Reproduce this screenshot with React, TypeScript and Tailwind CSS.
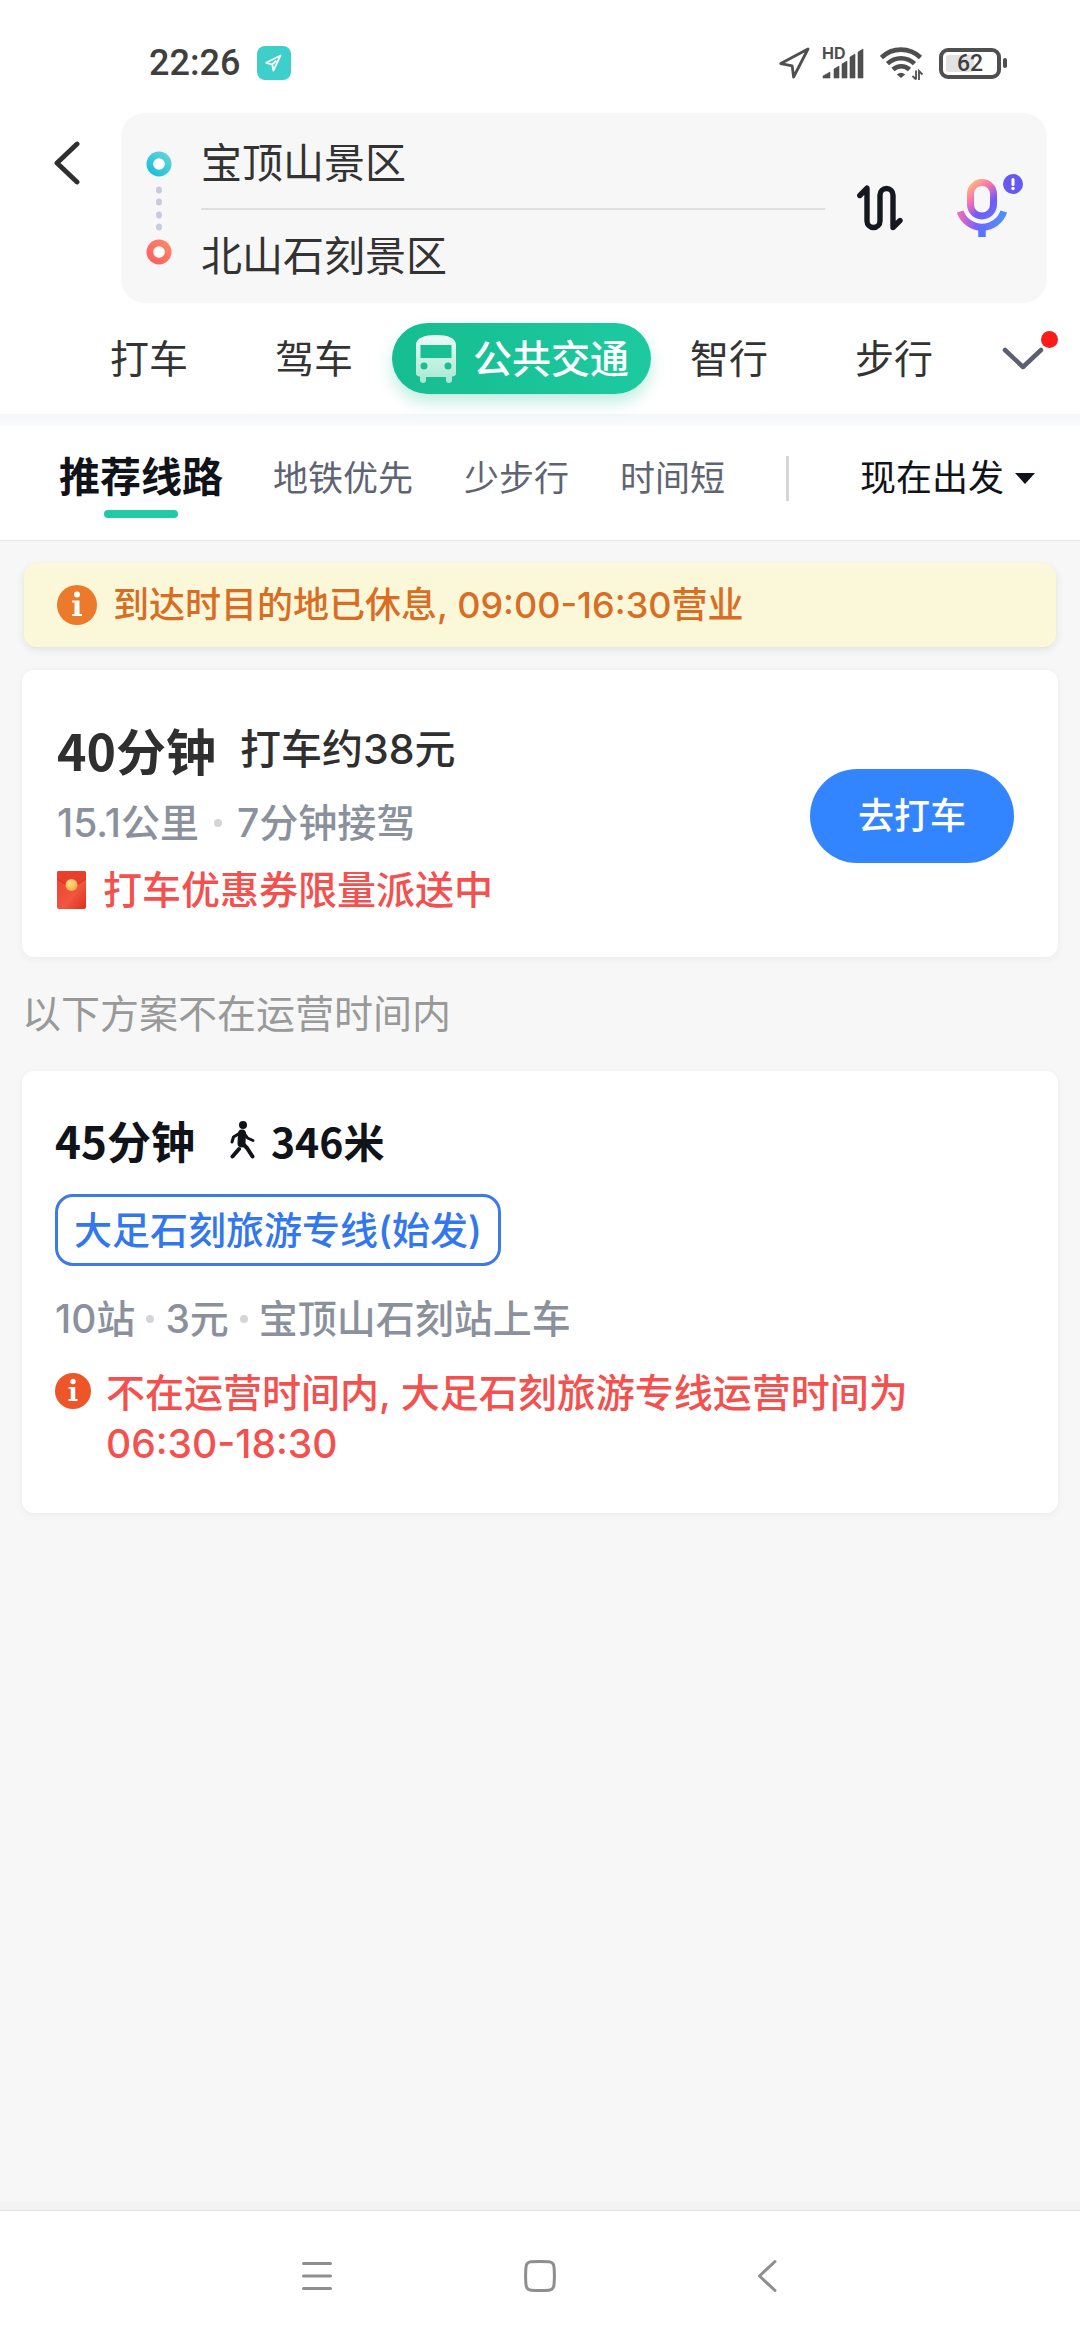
import React, { useState } from 'react';

const MODES_LEFT = ['打车', '驾车'];
const MODES_RIGHT = ['智行', '步行'];
const SORTS = ['地铁优先', '少步行', '时间短'];

const StatusBar: React.FC = () => (
  <div className="flex h-[113px] items-start justify-between pt-[45px] pl-[149px] pr-[73px] text-[#4f4f4f]">
    <div className="flex h-[36px] items-center gap-[17px]">
      <span className="font-['Roboto'] text-[36px] leading-[36px] font-medium text-[#3f3f3f]">22:26</span>
      <svg className="h-[34px] w-[34px]" viewBox="0 0 34 34" fill="none">
        <rect width="34" height="34" rx="8" fill="#3fcfcb" />
        <path d="M23.5 9.5 9.2 16.8l6 1.7 1.2 6.2z M15.2 18.5l4-3.8" stroke="#fff" strokeWidth="1.8" strokeLinejoin="round" />
      </svg>
    </div>
    <div className="flex h-[36px] items-center">
      <svg className="mr-[12px] h-[32px] w-[31px]" viewBox="0 0 31 32" fill="none">
        <path d="M29 2 1.8 16.6l11.4 2.2L14.6 30z" stroke="currentColor" strokeWidth="2.8" strokeLinejoin="round" />
      </svg>
      <div className="relative mr-[16px] h-[32px] w-[42px]">
        <span className="absolute -top-[1px] left-0 font-['Inter'] text-[16px] leading-[14px] font-bold">HD</span>
        <svg className="h-[32px] w-[42px]" viewBox="0 0 42 32" fill="currentColor">
          <path d="M1 31v-2l7-4v6z M12 31V22l5-3v12z M20 31V17l5-3v17z M28 31V10l5-3v24z M36 31V5l5-3v29z" stroke="currentColor" strokeWidth=".6" strokeLinejoin="round" />
        </svg>
      </div>
      <svg className="mr-[16px] h-[34px] w-[43px]" viewBox="0 0 43 34" fill="none">
        <g stroke="currentColor" strokeWidth="4.6">
          <path d="M1.5 11.5a28 28 0 0 1 39 0" />
          <path d="M7.5 17.7a19.5 19.5 0 0 1 27 0" />
          <path d="M13 23.5a12 12 0 0 1 16.500 0" />
        </g>
        <path d="M16.800 28.500a6.500 6.500 0 0 1 8.400 0L21 32z" fill="currentColor" />
        <path d="M36 24.500v9M36 33.500l-3.500-3.500M39 34v-9l3.500 3.500" stroke="currentColor" strokeWidth="1.800" />
      </svg>
      <div className="flex items-center gap-[2px]">
        <div className="relative flex h-[31px] w-[62px] items-center justify-center rounded-[9px] border-4 border-[#4f4f4f]">
          <span className="absolute top-[3px] bottom-[3px] left-[3px] w-[28px] rounded-[3px] bg-[#e2e2e2]" />
          <span className="relative font-['Roboto'] text-[23px] leading-[23px] font-medium text-[#3f3f3f]">62</span>
        </div>
        <span className="h-[10px] w-[4px] rounded-full bg-[#4f4f4f]" />
      </div>
    </div>
  </div>
);

const RouteDots: React.FC = () => (
  <svg className="h-[116px] w-[26px]" viewBox="0 0 26 116">
    <defs>
      <linearGradient id="startDot" x1="1" y1="0" x2="0" y2="1">
        <stop offset="0" stopColor="#6adbd3" />
        <stop offset="1" stopColor="#12b7dd" />
      </linearGradient>
      <linearGradient id="endDot" x1="1" y1="0" x2="0" y2="1">
        <stop offset="0" stopColor="#ff8c66" />
        <stop offset="1" stopColor="#fd5963" />
      </linearGradient>
    </defs>
    <circle cx="13" cy="14" r="12.500" fill="url(#startDot)" />
    <circle cx="13" cy="14" r="5.800" fill="#fff" />
    {[40, 52, 65, 77].map(y => (
      <ellipse key={y} cx="13" cy={y} rx="3" ry="3.600" fill="#cbc9de" />
    ))}
    <circle cx="13" cy="102" r="12.500" fill="url(#endDot)" />
    <circle cx="13" cy="102" r="5.800" fill="#fff" />
  </svg>
);

const MicIcon: React.FC = () => (
  <svg className="h-[68px] w-[68px]" viewBox="0 0 68 68" fill="none">
    <defs>
      <linearGradient id="micBody" x1="10" y1="8" x2="42" y2="44" gradientUnits="userSpaceOnUse">
        <stop offset="0.1" stopColor="#ffb086" />
        <stop offset="0.35" stopColor="#fb6fae" />
        <stop offset="0.65" stopColor="#6c5cf7" />
        <stop offset="1" stopColor="#6d74ff" />
      </linearGradient>
      <linearGradient id="micStand" x1="0" y1="40" x2="50" y2="46" gradientUnits="userSpaceOnUse">
        <stop offset="0" stopColor="#fb6fae" />
        <stop offset="0.4" stopColor="#7e60fb" />
        <stop offset="1" stopColor="#4595ff" />
      </linearGradient>
    </defs>
    <rect x="13.500" y="8.500" width="23" height="33.500" rx="11.500" stroke="url(#micBody)" strokeWidth="7" />
    <path d="M3.200 37.500a23 23 0 0 0 43.600 0" stroke="url(#micStand)" strokeWidth="7" />
    <path d="M25 52v11" stroke="#5a74ff" strokeWidth="7.500" />
    <circle cx="56" cy="10" r="10" fill="#6659ef" />
    <path d="M56 5.500v5" stroke="#fff" strokeWidth="3" strokeLinecap="round" />
    <circle cx="56" cy="14.500" r="1.700" fill="#fff" />
  </svg>
);

const SearchBox: React.FC = () => (
  <div className="flex items-start pr-[33px]">
    <button aria-label="返回" className="flex h-[100px] w-[121px] items-center pl-[53px]">
      <svg className="h-[44px] w-[28px]" viewBox="0 0 28 44" fill="none">
        <path d="M24 3 4 22l20 19" stroke="#2f2f2f" strokeWidth="4.900" strokeLinecap="round" strokeLinejoin="round" />
      </svg>
    </button>
    <div className="flex h-[190px] flex-1 items-center rounded-[24px] bg-[#f7f7f7] pl-[25px]">
      <RouteDots />
      <div className="ml-[29px] flex flex-1 flex-col self-stretch text-[41px] text-[#333]">
        <input aria-label="起点" defaultValue="宝顶山景区" className="h-[97px] w-full border-b-2 border-[#dfdfdf] bg-transparent pb-[2px] outline-none" />
        <input aria-label="终点" defaultValue="北山石刻景区" className="h-[93px] w-full bg-transparent pb-[8px] outline-none" />
      </div>
      <button aria-label="交换起终点" className="ml-[32px]">
        <svg className="h-[46px] w-[46px]" viewBox="0 0 46 46" fill="none">
          <path d="M2.800 10.500 10 3.200V36a6.500 6.500 0 0 0 13 0V10a6.500 6.500 0 0 1 13 0v32.500l7-7" stroke="#15181f" strokeWidth="5.400" strokeLinecap="round" strokeLinejoin="round" />
        </svg>
      </button>
      <button aria-label="语音" className="mr-[22px] ml-[54px]">
        <MicIcon />
      </button>
    </div>
  </div>
);

const ModeTabs: React.FC = () => (
  <div className="flex items-center gap-[39px] py-[20px] pr-[20px] pl-[110px] text-[39px] leading-[71px] text-[#333]">
    <div className="flex gap-[87px]">
      {MODES_LEFT.map(m => <button key={m}>{m}</button>)}
    </div>
    <button className="flex h-[71px] items-center gap-[17px] rounded-full bg-gradient-to-r from-[#16bd90] to-[#1dca9f] pr-[22px] pl-[24px] font-medium text-white shadow-[0_8px_16px_rgba(26,193,149,0.28)]">
      <svg className="h-[48px] w-[40px]" viewBox="0 0 40 48">
        <defs>
          <linearGradient id="bus" x1="0" y1="0" x2="0" y2="1">
            <stop offset="0" stopColor="#eefaf6" />
            <stop offset="1" stopColor="#a5e8d2" />
          </linearGradient>
        </defs>
        <path
          fillRule="evenodd"
          fill="url(#bus)"
          d="M0 10C0 3 8 0 20 0s20 3 20 10v28c0 2-1 3.500-4 3.500V45a3 3 0 0 1-6 0v-3H10v3a3 3 0 0 1-6 0v-3.500C1 41.500 0 40 0 38z M4.500 10v13h31V10z M8 27.500a3.500 3.500 0 1 0 0 7 3.500 3.500 0 0 0 0-7z M32 27.500a3.500 3.500 0 1 0 0 7 3.500 3.500 0 0 0 0-7z"
        />
      </svg>
      公共交通
    </button>
    <div className="flex gap-[87px]">
      {MODES_RIGHT.map(m => <button key={m}>{m}</button>)}
    </div>
    <button aria-label="更多出行方式" className="relative ml-auto flex h-[71px] w-[58px] items-center">
      <svg className="h-[24px] w-[42px]" viewBox="0 0 42 24" fill="none">
        <path d="M3 3l18 17L39 3" stroke="#5b6070" strokeWidth="4.500" strokeLinecap="round" strokeLinejoin="round" />
      </svg>
      <span className="absolute top-[8px] right-[2px] h-[17px] w-[17px] rounded-full bg-[#fb1b1b]" />
    </button>
  </div>
);

const SortBar: React.FC = () => {
  const [departure, setDeparture] = useState('now');

  return (
    <div className="border-b border-[#e6e6e6]">
      <div className="h-[12px] bg-gradient-to-b from-[#f4f6f9] to-[#fafbfc]" />
      <div className="mb-[10px] flex h-[104px] items-center pr-[45px] pl-[59px] text-[35px] text-[#5f6473]">
        <button className="relative text-[41px] font-bold text-[#101319]">
          推荐线路
          <span className="absolute -bottom-[9px] left-1/2 h-[8px] w-[74px] -translate-x-1/2 rounded-full bg-[#22c9a5]" />
        </button>
        <div className="ml-[50px] flex gap-[51px]">
          {SORTS.map(s => <button key={s}>{s}</button>)}
        </div>
        <span className="ml-auto h-[45px] w-[3px] bg-[#d6d6d6]" />
        <label className="relative ml-[71px] flex items-center">
          <select
            aria-label="出发时间"
            value={departure}
            onChange={e => setDeparture(e.target.value)}
            className="appearance-none bg-transparent pr-[30px] text-[36px] text-[#101319] outline-none"
          >
            <option value="now">现在出发</option>
          </select>
          <svg className="pointer-events-none absolute right-0 h-[11px] w-[20px]" viewBox="0 0 20 11">
            <path d="M0 0h20L10 11z" fill="#101319" />
          </svg>
        </label>
      </div>
    </div>
  );
};

const InfoIcon: React.FC<{ className: string; color: string }> = ({ className, color }) => (
  <svg className={className} viewBox="0 0 40 40">
    <circle cx="20" cy="20" r="20" fill={color} />
    <circle cx="20" cy="9.500" r="3" fill="#fff" />
    <path d="M15 15.500h7.500v13.500h2.500v2H15v-2h2.500V17.500H15z" fill="#fff" />
  </svg>
);

const Dot: React.FC = () => <span className="h-[8px] w-[8px] rounded-full bg-[#d4d5d8]" />;

const TaxiCard: React.FC = () => (
  <section className="flex items-center justify-between rounded-[12px] bg-white pt-[42px] pr-[44px] pb-[37px] pl-[35px] shadow-[0_2px_8px_rgba(0,0,0,0.05)]">
    <div>
      <h2 className="flex items-center gap-[24px] leading-[74px] text-[#2f2f2f]">
        <span className="font-['Noto_Sans_CJK_SC',sans-serif] text-[50px] font-semibold">40分钟</span>
        <span className="text-[41px] font-medium">打车约38元</span>
      </h2>
      <p className="flex items-center gap-[15px] text-[39px] leading-[74px] font-medium text-[#8a919d]">
        15.1公里 <Dot /> 7分钟接驾
      </p>
      <p className="flex items-center gap-[17px] text-[39px] leading-[60px] font-medium text-[#f4504e]">
        <svg className="h-[38px] w-[29px]" viewBox="0 0 29 38">
          <defs>
            <linearGradient id="packet" x1="0" y1="0" x2="1" y2="1">
              <stop offset="0" stopColor="#f0412f" />
              <stop offset="0.6" stopColor="#ef5640" />
              <stop offset="1" stopColor="#e02f1b" />
            </linearGradient>
            <radialGradient id="coin" cx="0.4" cy="0.35" r="0.7">
              <stop offset="0" stopColor="#ffe08a" />
              <stop offset="1" stopColor="#f7a53b" />
            </radialGradient>
          </defs>
          <rect width="29" height="38" rx="2" fill="url(#packet)" />
          <path d="M0 2a2 2 0 0 1 2-2h25a2 2 0 0 1 2 2v6L14.500 17 0 8z" fill="#ea3f2c" />
          <path d="M0 8l14.500 9L29 8" stroke="#d92f20" strokeWidth="1" fill="none" />
          <circle cx="14.500" cy="14" r="6" fill="url(#coin)" />
        </svg>
        打车优惠券限量派送中
      </p>
    </div>
    <button className="h-[94px] w-[204px] rounded-full bg-[#3385ff] text-[36px] font-medium text-white">去打车</button>
  </section>
);

const BusCard: React.FC = () => (
  <section className="rounded-[12px] bg-white pt-[39px] pr-[44px] pb-[44px] pl-[33px] shadow-[0_2px_8px_rgba(0,0,0,0.05)]">
    <h2 className="flex items-center font-['Noto_Sans_CJK_SC',sans-serif] leading-[60px] font-semibold text-[#101319]">
      <span className="text-[44px]">45分钟</span>
      <svg className="mr-[16px] ml-[35px] h-[38px] w-[25px]" viewBox="0 0 25 38" fill="none" stroke="#101319" strokeLinecap="round" strokeLinejoin="round">
        <circle cx="13" cy="4" r="4" fill="#101319" stroke="none" />
        <path d="M12 12.500l-.5 10" strokeWidth="8" />
        <path d="M10 12l-6.500 4L2 21" strokeWidth="3" />
        <path d="M14 12l3.500 5 5.500 2.500" strokeWidth="3" />
        <path d="M12 22l5 5 5.500 8.500" strokeWidth="4" />
        <path d="M9 28l-6.500 7.500" strokeWidth="4" />
      </svg>
      <span className="text-[41px]">346米</span>
    </h2>
    <div className="mt-[24px] inline-flex h-[72px] items-center rounded-[18px] border-3 border-[#3b7ae8] px-[16px] text-[38px] font-medium text-[#3377ee]">
      大足石刻旅游专线(始发)
    </div>
    <p className="mt-[23px] flex items-center gap-[11px] text-[39px] leading-[60px] font-medium text-[#8a919d]">
      10站 <Dot /> 3元 <Dot /> 宝顶山石刻站上车
    </p>
    <div className="mt-[18px] flex items-start gap-[15px] text-[39px] leading-[51px] font-medium text-[#f4504e]">
      <InfoIcon className="mt-[6px] h-[36px] w-[36px] shrink-0" color="#ee5528" />
      <p>
        不在运营时间内, 大足石刻旅游专线运营时间为
        <br />
        06:30-18:30
      </p>
    </div>
  </section>
);

const App: React.FC = () => {
  return (
    <div className="flex min-h-screen flex-col bg-[#f7f7f7] font-['Inter','Noto_Sans_CJK_SC',sans-serif]">
      <header className="bg-white">
        <StatusBar />
        <SearchBox />
        <ModeTabs />
        <SortBar />
      </header>

      <main className="flex flex-1 flex-col gap-[23px] px-[22px] pt-[22px]">
        <div className="mx-[2px] flex h-[84px] items-center gap-[16px] rounded-[13px] bg-[#fbf7d9] px-[33px] text-[36px] font-medium text-[#d96d24] shadow-[0_3px_8px_rgba(0,0,0,0.09)]">
          <InfoIcon className="h-[40px] w-[40px] shrink-0" color="#ec7a2b" />
          <span>到达时目的地已休息, 09:00-16:30营业</span>
        </div>
        <TaxiCard />
        <p className="text-[39px] leading-[68px] text-[#999]">以下方案不在运营时间内</p>
        <BusCard />
      </main>

      <div className="h-[8px] bg-[#f2f2f2]" />
      <nav className="grid h-[130px] grid-cols-[1fr_100px_1fr] items-center border-t border-[#e0e0e0] bg-white">
        <button aria-label="最近任务" className="mr-[156px] justify-self-end">
          <svg className="h-[34px] w-[34px]" viewBox="0 0 34 34" stroke="#8e8e8e" strokeWidth="3" strokeLinecap="round">
            <path d="M3.500 4.500h27M3.500 17h27M3.500 29.500h27" />
          </svg>
        </button>
        <button aria-label="主屏幕" className="justify-self-center">
          <svg className="h-[34px] w-[34px]" viewBox="0 0 34 34" fill="none" stroke="#8e8e8e" strokeWidth="3">
            <path d="M8 2.800q9-.8 18 0 4.500.5 5 5 .8 9 0 18-.5 4.900-5 5.400-9 .8-18 0-4.500-.5-5-5.400-.8-9 0-18 .5-4.500 5-5z" />
          </svg>
        </button>
        <button aria-label="后退" className="ml-[160px] justify-self-start">
          <svg className="h-[34px] w-[34px]" viewBox="0 0 34 34" fill="none" stroke="#8e8e8e" strokeWidth="3" strokeLinecap="round" strokeLinejoin="round">
            <path d="M25 2.500 9.500 17 25 31.500" />
          </svg>
        </button>
      </nav>
    </div>
  );
};

export default App;
